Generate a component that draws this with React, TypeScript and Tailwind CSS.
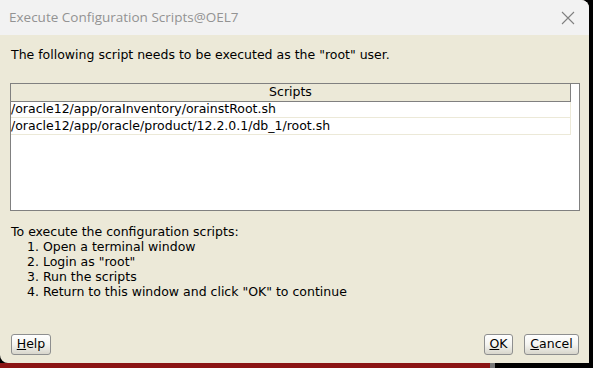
import React from "react";

const body = { fontFamily: '"DejaVu Sans", sans-serif' };

function Btn({ children, className = "" }: { children: React.ReactNode; className?: string }) {
  return (
    <button
      className={`h-[21px] rounded-[3px] border border-[#8e8f8f] bg-gradient-to-b from-[#ffffff] via-[#f4f4f0] to-[#d8d6cc] text-[12.5px] leading-none text-black ${className}`}
      style={body}
    >
      {children}
    </button>
  );
}

export default function App() {
  return (
    <div className="relative h-[368px] w-[593px] overflow-hidden bg-black">
      <div className="flex h-[363px] w-[589px] flex-col overflow-hidden rounded-tr-[8px] rounded-bl-[8px] bg-[#ece9d8]">
        <div className="flex h-[35px] shrink-0 items-center justify-between bg-[#f2f2f2] pl-[9px] pr-[14px]">
          <span className="text-[13.5px] text-[#939393]" style={{ fontFamily: '"Open Sans", "Noto Sans", sans-serif' }}>
            Execute Configuration Scripts@OEL7
          </span>
          <svg width="14" height="14" viewBox="0 0 14 14">
            <path d="M1 1 L13 13 M13 1 L1 13" stroke="#808080" strokeWidth="1.1" />
          </svg>
        </div>
        <div className="flex flex-1 flex-col px-[10px]" style={body}>
          <div className="mt-[12px] pl-[1px] text-[12.5px] leading-[15px] text-black">
            The following script needs to be executed as the "root" user.
          </div>
          <div className="mt-[21px] flex h-[128px] w-[570px] border border-[#808080] bg-white">
            <div className="flex w-[560px] flex-col">
              <div className="flex h-[18px] items-center justify-center border-b border-r border-[#808080] bg-[#ece9d8] text-[12.5px] text-black">
                Scripts
              </div>
              <div className="flex h-[16px] items-center border-b border-r border-[#ece9d8] text-[12.5px] text-black">
                /oracle12/app/oraInventory/orainstRoot.sh
              </div>
              <div className="flex h-[17px] items-center border-b border-r border-[#ece9d8] text-[12.5px] text-black">
                /oracle12/app/oracle/product/12.2.0.1/db_1/root.sh
              </div>
            </div>
          </div>
          <div className="mt-[13px] pl-[1px] text-[12.5px] leading-[15px] text-black">
            <div>To execute the configuration scripts:</div>
            <div className="pl-[16px]">
              <div>1. Open a terminal window</div>
              <div>2. Login as "root"</div>
              <div>3. Run the scripts</div>
              <div>4. Return to this window and click "OK" to continue</div>
            </div>
          </div>
          <div className="mt-auto mb-[8px] flex items-center pl-[1px]">
            <Btn className="w-[40px]">
              <span className="underline">H</span>elp
            </Btn>
            <div className="flex-1" />
            <Btn className="w-[29px]">
              <span className="underline">O</span>K
            </Btn>
            <Btn className="ml-[11px] w-[55px]">
              <span className="underline">C</span>ancel
            </Btn>
          </div>
        </div>
      </div>
      <div className="flex h-[5px] w-full">
        <div className="w-[490px] bg-[#8b1414]" />
        <div className="w-[5px] bg-[#777]" />
        <div className="flex-1 bg-black" />
      </div>
    </div>
  );
}
